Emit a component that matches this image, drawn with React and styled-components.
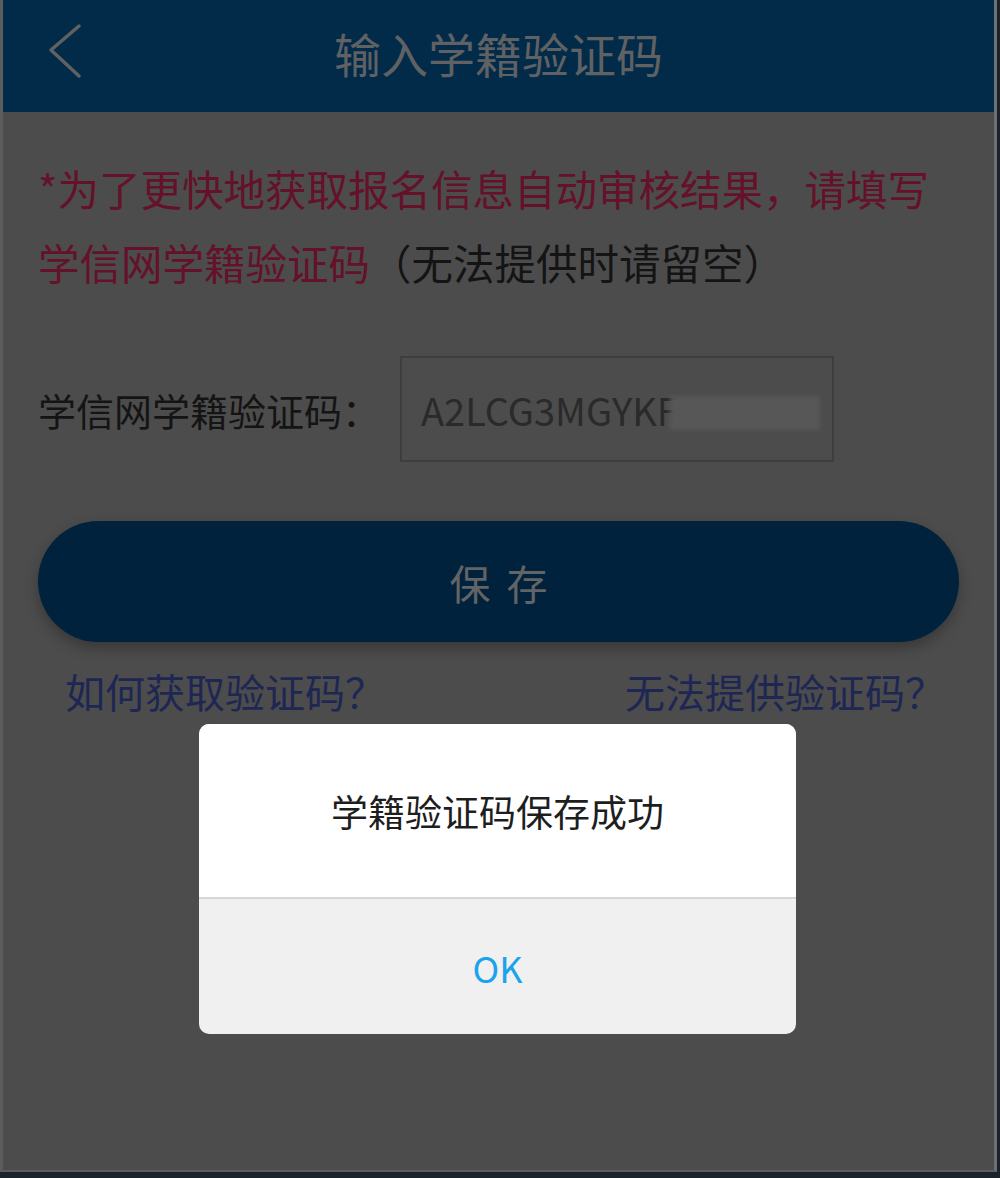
import React from 'react';
import styled, { createGlobalStyle } from 'styled-components';

const GlobalStyle = createGlobalStyle`
  html, body {
    margin: 0;
    padding: 0;
    background: #1b2229;
  }
  * {
    box-sizing: border-box;
  }
`;

const cjk = `"Noto Sans CJK SC", "Noto Sans", sans-serif`;

const Screen = styled.div`
  position: relative;
  width: 997px;
  height: 1172px;
  background: #4c4c4c;
  border-left: 3px solid #5c5c5c;
  border-right: 3px solid #6d7177;
  border-bottom: 2px solid #5a5d61;
  font-family: ${cjk};
  overflow: hidden;
`;

const Header = styled.header`
  height: 112px;
  background: #022b4a;
  display: grid;
  grid-template-columns: 1fr auto 1fr;
  align-items: center;
  padding-bottom: 8px;
`;

const BackButton = styled.div`
  padding-left: 40px;
  display: flex;
  align-items: center;
`;

const Title = styled.h1`
  margin: 0;
  font-size: 47px;
  line-height: 1;
  font-weight: 400;
  color: #5f6163;
`;

const Body = styled.main`
  padding: 39px 35px 0;
`;

const Notice = styled.p`
  margin: 0;
  font-size: 41.5px;
  line-height: 74px;
  color: #641129;
  white-space: nowrap;
`;

const Muted = styled.span`
  color: #141414;
`;

const FieldRow = styled.div`
  margin-top: 57px;
  display: flex;
  align-items: center;
  gap: 20px;
`;

const Label = styled.label`
  font-size: 38px;
  color: #141414;
`;

const InputBox = styled.div`
  position: relative;
  width: 434px;
  height: 106px;
  border: 2px solid #3e3e3e;
  display: flex;
  align-items: center;
  padding-left: 19px;
  font-size: 38px;
  color: #2a2a2a;
  overflow: hidden;
`;

const Masked = styled.span`
  position: absolute;
  left: 268px;
  top: 38px;
  width: 150px;
  height: 34px;
  background: #575757;
  filter: blur(2px);
`;

const SaveButton = styled.div`
  margin-top: 59px;
  height: 121px;
  border-radius: 61px;
  background: #00223c;
  box-shadow: 0 6px 14px rgba(0, 0, 0, 0.28);
  display: flex;
  align-items: center;
  justify-content: center;
  padding-left: 16px;
  font-size: 41px;
  color: #626466;
  letter-spacing: 16px;
`;

const Links = styled.div`
  margin-top: 24px;
  padding: 0 14px 0 27px;
  display: flex;
  justify-content: space-between;
  font-size: 40px;
  line-height: 50px;
  color: #1e2654;
`;

const Dialog = styled.div`
  position: absolute;
  left: 196px;
  top: 724px;
  width: 597px;
  height: 310px;
  border-radius: 10px;
  overflow: hidden;
  background: #f0f0f0;
  display: flex;
  flex-direction: column;
`;

const DialogMessage = styled.div`
  height: 175px;
  background: #ffffff;
  border-bottom: 2px solid #d6d6d6;
  display: flex;
  align-items: center;
  justify-content: center;
  padding-bottom: 0;
  font-size: 37px;
  color: #1e1e1e;
`;

const DialogAction = styled.div`
  flex: 1;
  display: flex;
  align-items: center;
  justify-content: center;
  font-size: 36px;
  color: #1ba3ec;
`;

const App = () => (
  <>
    <GlobalStyle />
    <Screen>
      <Header>
        <BackButton>
          <svg width="44" height="60" viewBox="0 0 44 60" fill="none">
            <path d="M36 4 L8 28 L36 54" stroke="#5f6163" strokeWidth="3.5" strokeLinecap="round" strokeLinejoin="round" />
          </svg>
        </BackButton>
        <Title>输入学籍验证码</Title>
        <div />
      </Header>
      <Body>
        <Notice>
          *为了更快地获取报名信息自动审核结果，请填写
          <br />
          学信网学籍验证码<Muted>（无法提供时请留空）</Muted>
        </Notice>
        <FieldRow>
          <Label>学信网学籍验证码：</Label>
          <InputBox>
            A2LCG3MGYKF
            <Masked />
          </InputBox>
        </FieldRow>
        <SaveButton>保存</SaveButton>
        <Links>
          <span>如何获取验证码？</span>
          <span>无法提供验证码？</span>
        </Links>
      </Body>
      <Dialog>
        <DialogMessage>学籍验证码保存成功</DialogMessage>
        <DialogAction>OK</DialogAction>
      </Dialog>
    </Screen>
  </>
);

export default App;
